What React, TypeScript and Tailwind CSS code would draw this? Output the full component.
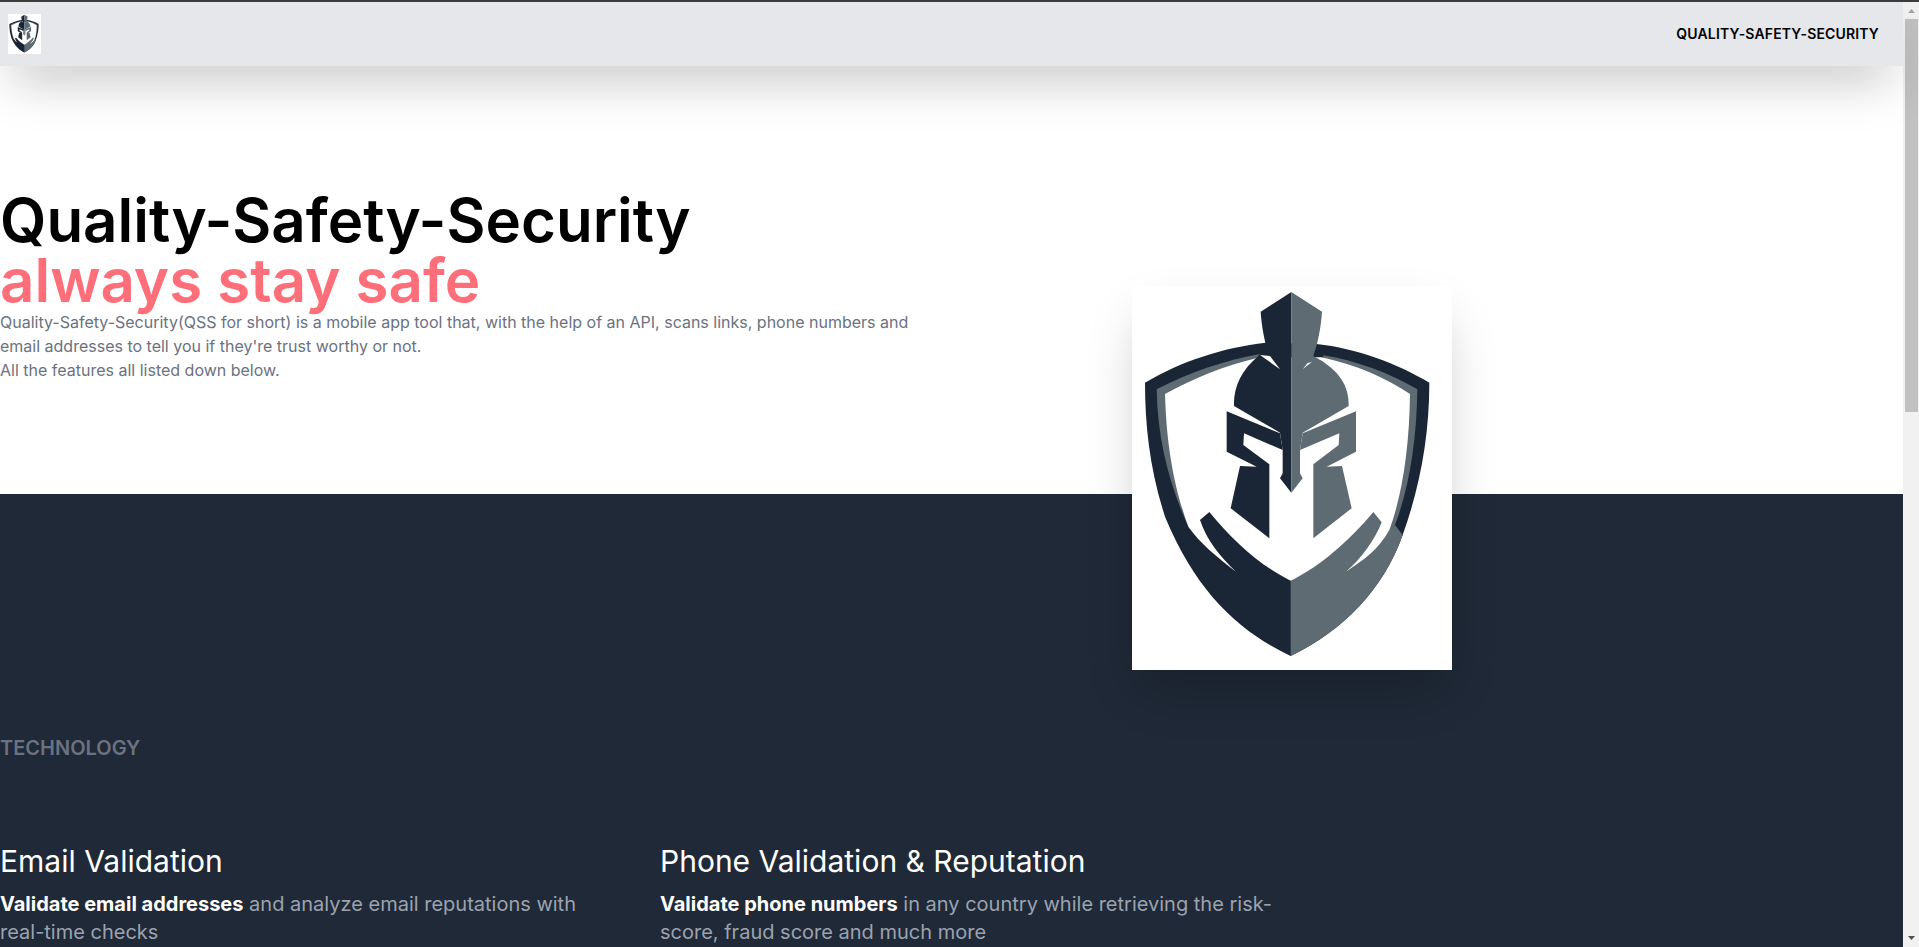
const DARK = '#1a2635';
const GRAY = '#5f6b73';

// Spartan shield logo, traced in the coordinates of the big picture
function Logo({ className }: { className?: string }) {
  return (
    <svg viewBox="96 48 960 1152" preserveAspectRatio="none" className={className}>
      <rect x="96" y="48" width="960" height="1152" fill="#ffffff" />
      {/* shield body */}
      <path
        d="M572 1158 C420 1085 290 970 195 740 C150 600 135 470 135 338 C240 275 370 232 497 218 L650 222 C770 235 890 280 988 338 C988 500 960 650 908 795 C850 960 725 1085 572 1158 Z"
        fill={DARK}
      />
      <path d="M572 1158 C725 1085 850 960 908 795 L885 765 L860 780 L820 700 L572 900 Z" fill={GRAY} />
      {/* inner ring */}
      <path d="M170 358 C270 305 380 270 480 252 L480 320 L265 770 C210 650 172 510 170 358 Z" fill={GRAY} />
      <path d="M670 256 C770 272 870 310 952 358 C950 520 925 660 885 765 L850 790 L670 320 Z" fill={GRAY} />
      {/* white interior with the two blades */}
      <path
        d="M195 372 C280 325 380 285 480 262 L665 262 C770 285 860 325 930 372 C928 540 905 680 868 780 C835 840 790 870 738 905 C780 870 825 810 845 757 L820 726 C750 810 660 890 572 932 C485 890 400 815 328 726 L300 750 C320 810 360 860 408 905 C350 860 300 820 265 770 C225 660 200 540 195 372 Z"
        fill="#ffffff"
      />
      {/* helmet */}
      <path
        d="M574 66 L482 125 C485 170 492 200 497 222 L475 258 C425 300 400 350 402 408 L540 488 L548 540 L548 610 L540 625 L574 668 Z"
        fill={DARK}
      />
      <path
        d="M574 66 L666 125 C663 170 656 200 651 222 L640 258 C720 300 748 350 746 408 L608 488 L600 540 L600 610 L608 625 L574 668 Z"
        fill={GRAY}
      />
      <path d="M480 255 L510 258 L540 298 Z" fill="#ffffff" />
      <path d="M608 298 L622 280 L636 275 Z" fill="#ffffff" />
      <path
        d="M380 424 L540 490 L548 540 L432 490 L430 525 L508 583 L508 805 L392 715 L420 588 L470 590 L380 545 Z"
        fill={DARK}
      />
      <path
        d="M768 424 L608 490 L600 540 L718 490 L716 525 L640 583 L640 805 L755 715 L726 588 L680 590 L768 545 Z"
        fill={GRAY}
      />
    </svg>
  );
}

function Feature({ title, lead, rest }: { title: string; lead: string; rest: string }) {
  return (
    <div>
      <h3 className="text-[30px] leading-9 font-normal text-white">{title}</h3>
      <p className="mt-[11px] text-xl leading-7 text-[#9ca3af]">
        <strong className="font-bold text-white">{lead}</strong> {rest}
      </p>
    </div>
  );
}

export default function App() {
  return (
    <div className="h-screen flex flex-col overflow-hidden bg-white font-['Inter',sans-serif]">
      <div className="h-[2px] shrink-0 bg-[#3c3c3c]" />

      <div className="flex-1 min-h-0 flex">
        <div className="flex-1 min-w-0 flex flex-col">
          {/* Nav */}
          <nav className="relative z-10 h-[64px] shrink-0 bg-[#e5e7eb] shadow-2xl flex items-center justify-between pl-2 pr-6">
            <Logo className="w-[33px] h-[40px]" />
            <span className="text-sm font-semibold uppercase tracking-[0.15px] text-black">Quality-Safety-Security</span>
          </nav>

          {/* Hero */}
          <section className="relative h-[428px] shrink-0 pt-[124px]">
            <h1 className="text-6xl leading-[60px] font-semibold text-black">
              Quality-Safety-Security
              <br />
              <span className="text-[#ff6f7a]">always stay safe</span>
            </h1>
            <p className="max-w-[920px] text-base leading-6 text-[#6b7280]">
              Quality-Safety-Security(QSS for short) is a mobile app tool that, with the help of an API, scans links, phone
              numbers and email addresses to tell you if they're trust worthy or not.
              <br />
              All the features all listed down below.
            </p>
            <div className="absolute z-10 left-[1132px] top-[220px] shadow-2xl">
              <Logo className="block w-[320px] h-[384px]" />
            </div>
          </section>

          {/* Technology */}
          <section className="flex-1 bg-[#1f2937] pt-[240px]">
            <h2 className="text-xl leading-7 font-semibold uppercase text-[#6b7280]">Technology</h2>
            <div className="mt-[81px] grid grid-cols-[660px_640px]">
              <div className="pr-[60px]">
                <Feature
                  title="Email Validation"
                  lead="Validate email addresses"
                  rest="and analyze email reputations with real-time checks"
                />
              </div>
              <Feature
                title="Phone Validation & Reputation"
                lead="Validate phone numbers"
                rest="in any country while retrieving the risk-score, fraud score and much more"
              />
            </div>
          </section>
        </div>

        {/* Scrollbar */}
        <div className="w-[16px] shrink-0 bg-[#f1f1f1] pl-[2px] pr-[1px] flex flex-col items-stretch">
          <svg viewBox="0 0 7 4" className="mt-[7px] h-[4px] w-[7px] self-center">
            <path d="M3.5 0 L7 4 L0 4 Z" fill="#a3a3a3" />
          </svg>
          <div className="mt-[6px] h-[393px] bg-[#c1c1c1]" />
          <svg viewBox="0 0 7 4" className="mt-auto mb-[7px] h-[4px] w-[7px] self-center">
            <path d="M0 0 L7 0 L3.5 4 Z" fill="#505050" />
          </svg>
        </div>
      </div>
    </div>
  );
}
